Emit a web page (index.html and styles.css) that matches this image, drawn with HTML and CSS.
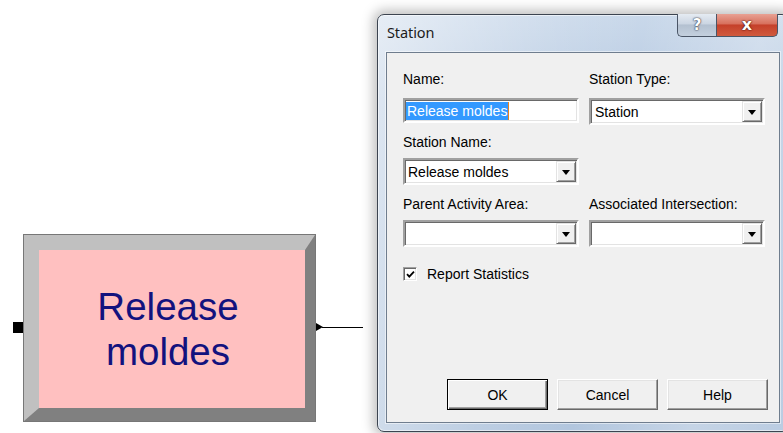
FILE: index.html
```html
<!DOCTYPE html>
<html lang="en">
<head>
<meta charset="utf-8">
<title>Station</title>
<link rel="stylesheet" href="styles.css">
</head>
<body>
<div class="canvas">
  <div class="module">
    <span class="port-in"></span>
    <div class="module-body">
      <div class="module-face">Release<br>moldes</div>
    </div>
    <span class="port-out"></span>
    <span class="link"></span>
  </div>

  <div class="window">
    <div class="titlebar">
      <span class="title">Station</span>
      <div class="caption-btns">
        <span class="cap cap-help">?</span>
        <span class="cap cap-close">x</span>
      </div>
    </div>
    <div class="client">
      <div class="form">
        <span class="lbl">Name:</span>
        <span class="lbl">Station Type:</span>

        <div class="edit ctl"><span class="sel">Release moldes</span><span class="caret"></span></div>
        <div class="combo ctl"><span class="val">Station</span><span class="drop"><i></i></span></div>

        <span class="lbl row2">Station Name:</span>
        <span class="lbl row2"></span>

        <div class="combo ctl"><span class="val">Release moldes</span><span class="drop"><i></i></span></div>
        <div class="ctl"></div>

        <span class="lbl row3">Parent Activity Area:</span>
        <span class="lbl row3">Associated Intersection:</span>

        <div class="combo ctl"><span class="val"></span><span class="drop"><i></i></span></div>
        <div class="combo ctl"><span class="val"></span><span class="drop"><i></i></span></div>

        <label class="check">
          <span class="box">
            <svg width="9" height="9" viewBox="0 0 9 9"><path d="M1 4.2 L3.3 6.6 L8 1.6" fill="none" stroke="#000" stroke-width="1.8"/></svg>
          </span>
          <span>Report Statistics</span>
        </label>
      </div>

      <div class="actions">
        <span class="btn default">OK</span>
        <span class="btn">Cancel</span>
        <span class="btn">Help</span>
      </div>
    </div>
  </div>
</div>
</body>
</html>
```

FILE: styles.css
```css
html, body {
  margin: 0;
  padding: 0;
  background: #fff;
}

.canvas {
  position: relative;
  width: 783px;
  height: 433px;
  overflow: hidden;
  font-family: "Liberation Sans", Arial, sans-serif;
}

/* ---- process module on the model canvas ---- */
.module {
  position: absolute;
  left: 13px;
  top: 234px;
  width: 350px;
  height: 190px;
}

.module-body {
  position: absolute;
  left: 11px;
  top: 1px;
  width: 291px;
  height: 186px;
  box-sizing: border-box;
  border-style: solid;
  border-width: 15px 10px 13px 15px;
  border-color: #c0c0c0 #808080 #808080 #c0c0c0;
  outline: 1px solid #777;
}

.module-face {
  height: 100%;
  box-sizing: border-box;
  padding-right: 8px;
  background: #ffc0c0;
  display: flex;
  align-items: center;
  justify-content: center;
  text-align: center;
  color: #12127e;
  font-size: 38.5px;
  line-height: 45px;
}

.port-in {
  position: absolute;
  left: 0;
  top: 88px;
  width: 10px;
  height: 11px;
  background: #000;
}

.port-out {
  position: absolute;
  left: 303px;
  top: 89px;
  width: 0;
  height: 0;
  border-top: 4px solid transparent;
  border-bottom: 4px solid transparent;
  border-left: 7px solid #000;
}

.link {
  position: absolute;
  left: 309px;
  top: 93px;
  width: 41px;
  height: 1px;
  background: #000;
}

/* ---- dialog window ---- */
.window {
  position: absolute;
  left: 377px;
  top: 14px;
  width: 412px;
  height: 418px;
  box-sizing: border-box;
  border: 1px solid #3c4450;
  border-radius: 7px;
  padding: 0 8px 8px 8px;
  display: flex;
  flex-direction: column;
  background:
    linear-gradient(100deg, rgba(255,255,255,0.55) 0%, rgba(255,255,255,0.15) 35%, rgba(255,255,255,0) 55%, rgba(255,255,255,0.25) 80%, rgba(255,255,255,0.1) 100%),
    linear-gradient(180deg, #c9d8ea 0%, #b8cbe2 20%, #b2c6de 100%);
  box-shadow: 0 0 12px 4px rgba(0,0,0,0.25), inset 0 0 0 1px rgba(255,255,255,0.55);
}

.titlebar {
  height: 37px;
  display: flex;
  align-items: flex-start;
  justify-content: space-between;
}

.title {
  align-self: center;
  margin-left: 1px;
  margin-bottom: 3px;
  font-family: "Noto Sans", "Open Sans", sans-serif;
  font-size: 14.5px;
  color: #1b1b1b;
  letter-spacing: -0.1px;
}

.caption-btns {
  display: flex;
  margin-top: -1px;
  margin-right: 2px;
}

.cap {
  height: 23px;
  box-sizing: border-box;
  display: flex;
  align-items: center;
  justify-content: center;
  border: 1px solid #4a5566;
  border-top: none;
  font-family: "DejaVu Sans", sans-serif;
  font-weight: bold;
  color: #fff;
}

.cap-help {
  width: 39px;
  border-right: none;
  border-bottom-left-radius: 5px;
  background: linear-gradient(180deg, #e5ebf2 0%, #cbd5e2 45%, #b3c0d0 50%, #c4d0de 100%);
  color: #fff;
  font-size: 15px;
  text-shadow: 0 0 2px #334, 0 0 1px #223;
}

.cap-close {
  width: 62px;
  border-bottom-right-radius: 5px;
  background: linear-gradient(180deg, #e8a193 0%, #d7705d 45%, #c5402a 50%, #d05a3e 100%);
  font-size: 16px;
  text-shadow: 0 0 2px #4a0d00, 0 0 1px #3a0800;
  line-height: 1;
}

.client {
  flex: 1;
  display: flex;
  flex-direction: column;
  background: #f0f0f0;
  border: 1px solid #6f7d8e;
  box-shadow: 0 0 0 1px rgba(255,255,255,0.5);
  padding: 18px 11px 12px 16px;
  font-size: 14px;
  color: #000;
}

.form {
  display: grid;
  grid-template-columns: 176px 176px;
  column-gap: 10px;
  align-items: start;
}

.lbl {
  height: 16px;
  line-height: 16px;
  white-space: nowrap;
}

.row2 { margin-top: 9px; }
.row3 { margin-top: 11px; }

.ctl { margin-top: 11px; }
.form > .combo.ctl:nth-child(n+5) { margin-top: 8px; }
.form > div:nth-child(8) { margin-top: 8px; }

/* sunken controls */
.edit,
.combo {
  box-sizing: border-box;
  background: #fff;
  border: 2px solid;
  border-color: #a0a0a0 #fff #fff #a0a0a0;
  box-shadow: inset 1px 1px 0 #696969, inset -1px -1px 0 #e3e3e3;
}

.edit {
  height: 25px;
  display: flex;
  align-items: center;
  padding-left: 1px;
}

.sel {
  background: #3399ff;
  color: #fff;
  line-height: 18px;
  padding: 0 1px;
}

.caret {
  width: 1px;
  height: 18px;
  background: #e8821e;
}

.combo {
  height: 27px;
  display: flex;
  align-items: stretch;
}

.val {
  flex: 1;
  display: flex;
  align-items: center;
  padding-left: 3px;
}

.form > .combo:nth-child(4) .val { padding-left: 4px; }

.drop {
  width: 20px;
  margin: 1px 1px 1px 0;
  box-sizing: border-box;
  background: #f0f0f0;
  border: 1px solid;
  border-color: #e3e3e3 #696969 #696969 #e3e3e3;
  box-shadow: inset 1px 1px 0 #fff, inset -1px -1px 0 #a0a0a0;
  display: flex;
  align-items: center;
  justify-content: center;
}

.drop i {
  width: 0;
  height: 0;
  margin-top: 1px;
  border-left: 4px solid transparent;
  border-right: 4px solid transparent;
  border-top: 5px solid #000;
}

.check {
  grid-column: 1 / span 2;
  margin-top: 19px;
  display: flex;
  align-items: center;
  gap: 10px;
  line-height: 16px;
}

.box {
  width: 14px;
  height: 14px;
  box-sizing: border-box;
  background: #fff;
  border: 1px solid;
  border-color: #a0a0a0 #fff #fff #a0a0a0;
  box-shadow: inset 1px 1px 0 #696969, inset -1px -1px 0 #e3e3e3;
  display: flex;
  align-items: center;
  justify-content: center;
}

.actions {
  margin-top: auto;
  display: flex;
  justify-content: flex-end;
  gap: 9px;
}

.btn {
  width: 101px;
  height: 31px;
  box-sizing: border-box;
  display: flex;
  align-items: center;
  justify-content: center;
  background: #f0f0f0;
  border: 1px solid;
  border-color: #fff #696969 #696969 #fff;
  box-shadow: inset -1px -1px 0 #a0a0a0, inset 1px 1px 0 #e3e3e3;
}

.btn.default {
  border: 1px solid #000;
  box-shadow: inset 1px 1px 0 #fff, inset -1px -1px 0 #696969, inset -2px -2px 0 #a0a0a0;
}
```
